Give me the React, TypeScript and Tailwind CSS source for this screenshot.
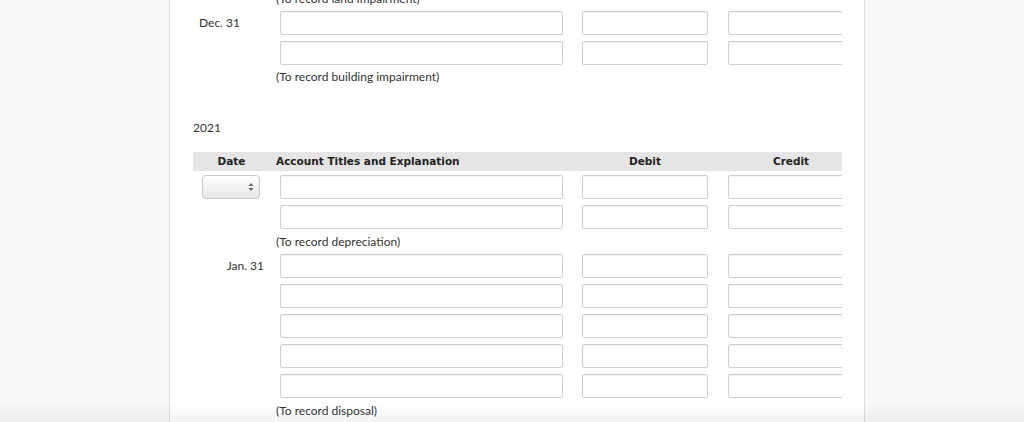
import React from "react";

const Input = ({ w, ml }: { w: string; ml: string }) => (
  <div className={`${w} ${ml} h-[24px] shrink-0 bg-white border border-[#cfcfcf] rounded-[2px] shadow-[inset_0_1px_1px_rgba(0,0,0,0.05)]`} />
);

const Row = ({ date, dateCls, select }: { date?: string; dateCls?: string; select?: boolean }) => (
  <div className="flex items-center h-[24px]">
    <div className={`w-[83px] shrink-0 h-[24px] flex items-center text-[12px] text-[#333] ${dateCls ?? ""}`}>
      {select ? (
        <div className="ml-[9px] w-[58px] h-[24px] rounded-[4px] border border-[#c8c8c8] bg-gradient-to-b from-[#ffffff] to-[#e6e6e6] flex items-center justify-end pr-[5px]">
          <svg width="6" height="10" viewBox="0 0 6 10">
            <path d="M3 1 L5.5 4 L0.5 4 Z" fill="#666" />
            <path d="M3 9 L5.5 6 L0.5 6 Z" fill="#666" />
          </svg>
        </div>
      ) : (
        date
      )}
    </div>
    <Input w="w-[283px]" ml="ml-[4px]" />
    <Input w="w-[126px]" ml="ml-[19px]" />
    <Input w="w-[126px]" ml="ml-[20px]" />
  </div>
);

const Note = ({ children, mt }: { children: React.ReactNode; mt: string }) => (
  <div className={`${mt} h-[16px] leading-[16px] pl-[83px] text-[12px] text-[#333] whitespace-nowrap`}>{children}</div>
);

export default function App() {
  return (
    <div
      className="relative h-[422px] w-[1024px] overflow-hidden bg-[#f8f8f8] flex"
      style={{ fontFamily: "Lato, 'Open Sans', sans-serif" }}
    >
      <div className="ml-[169px] w-[696px] h-full bg-white border-l border-r border-[#dedede] pl-[23px] pr-[22px]">
        <div className="overflow-hidden w-[649px] -mt-[9px]">
          <div className="h-[16px] leading-[16px] pl-[83px] text-[12px] text-[#333] whitespace-nowrap">
            (To record land impairment)
          </div>
          <div className="mt-[4px] flex flex-col gap-[6px]">
            <Row date="Dec. 31" dateCls="pl-[6px]" />
            <Row />
          </div>
          <Note mt="mt-[4px]">(To record building impairment)</Note>
          <div className="mt-[35px] h-[16px] leading-[16px] text-[12px] text-[#333]">2021</div>
          <div
            className="mt-[16px] h-[19px] bg-[#e5e5e5] flex items-center text-[10.5px] font-bold text-[#222] whitespace-nowrap"
            style={{ fontFamily: "'DejaVu Sans', Verdana, sans-serif" }}
          >
            <div className="w-[77px] shrink-0 text-center">Date</div>
            <div className="ml-[6px] w-[306px] shrink-0">Account Titles and Explanation</div>
            <div className="w-[126px] shrink-0 text-center">Debit</div>
            <div className="ml-[20px] w-[126px] shrink-0 text-center">Credit</div>
          </div>
          <div className="mt-[4px] flex flex-col gap-[6px]">
            <Row select />
            <Row />
          </div>
          <Note mt="mt-[5px]">(To record depreciation)</Note>
          <div className="mt-[4px] flex flex-col gap-[6px]">
            <Row date="Jan. 31" dateCls="justify-end pr-[12px]" />
            <Row />
            <Row />
            <Row />
            <Row />
          </div>
          <Note mt="mt-[5px]">(To record disposal)</Note>
        </div>
      </div>
      <div className="absolute left-0 right-0 bottom-0 h-[22px] bg-gradient-to-b from-[rgba(0,0,0,0)] to-[rgba(0,0,0,0.045)] pointer-events-none" />
    </div>
  );
}
